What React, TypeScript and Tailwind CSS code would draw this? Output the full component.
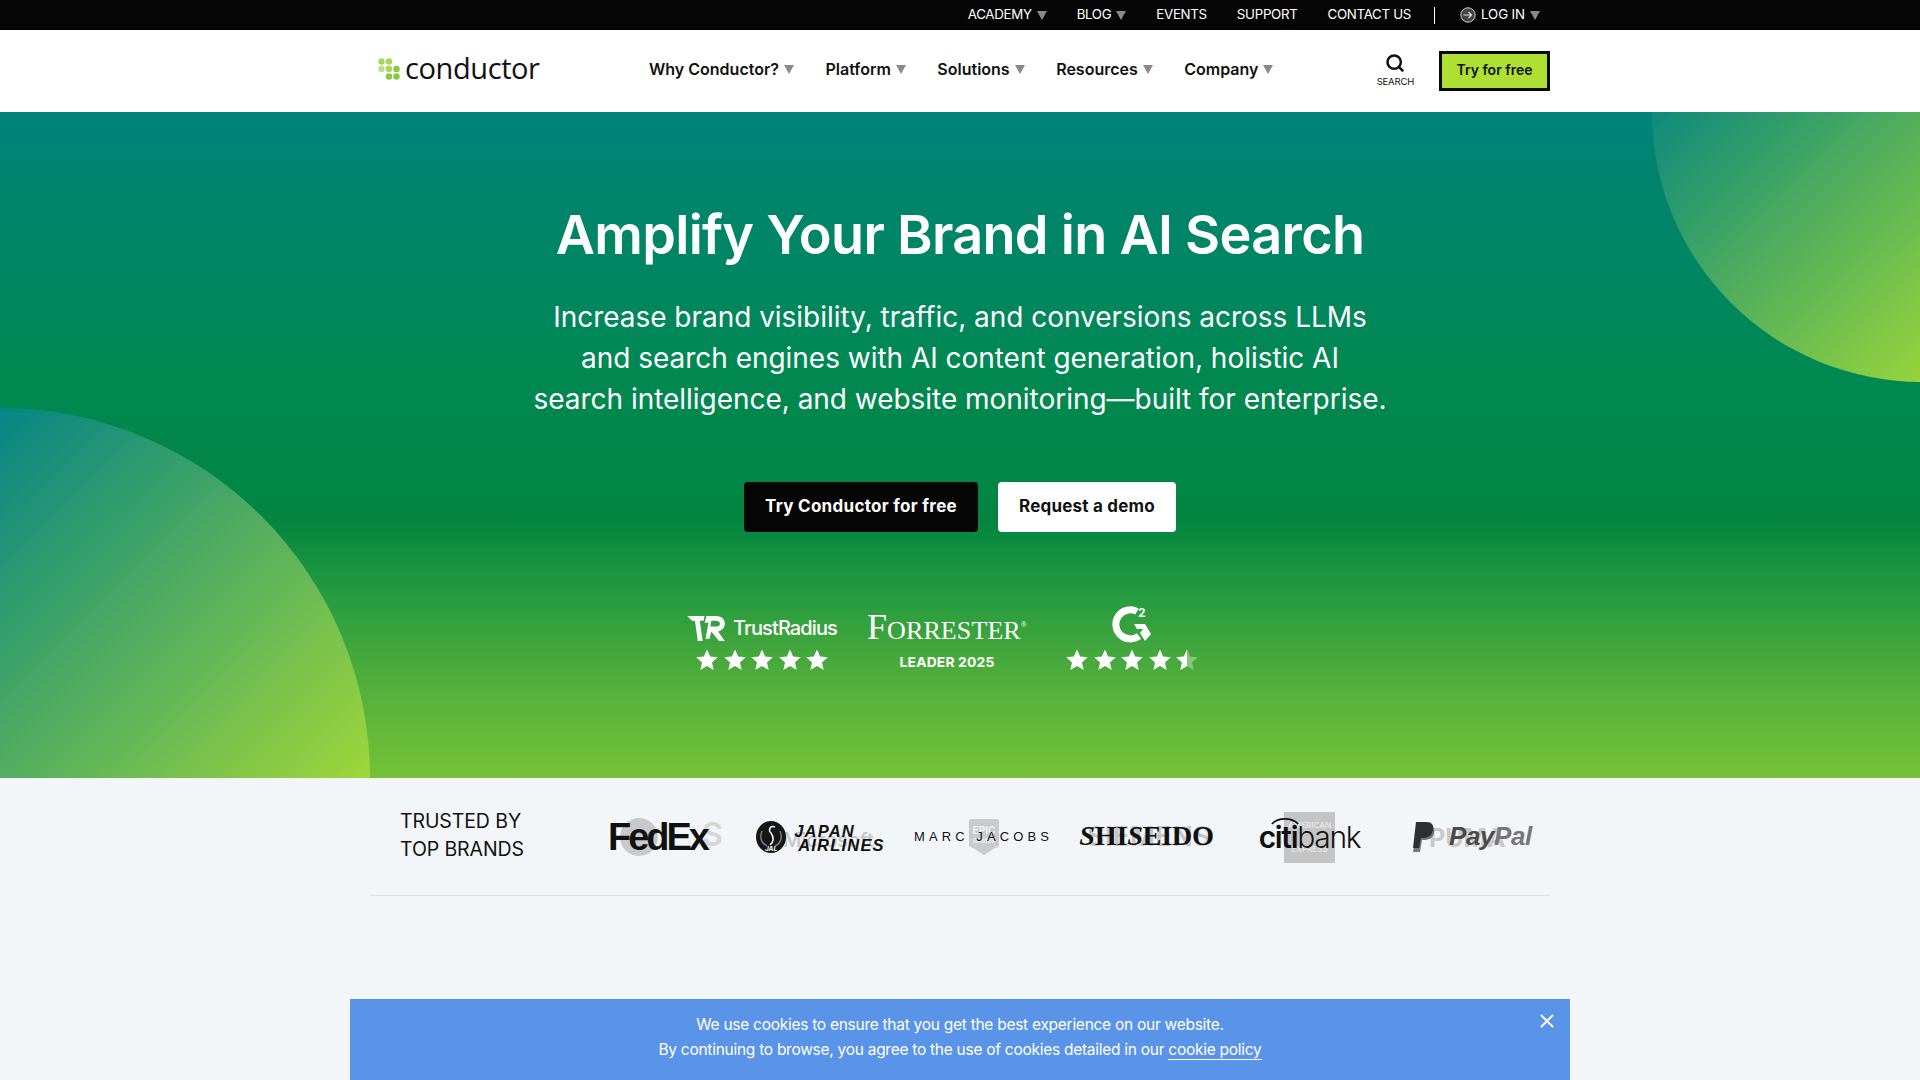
import React from 'react';
import { Search, X } from 'lucide-react';

const font = "font-['Inter','Noto_Sans',sans-serif]";

const Caret = ({ className = '' }: { className?: string }) => (
  <svg viewBox="0 0 10 9" className={`w-[10px] h-[9px] fill-[#8a8a8a] ${className}`}>
    <path d="M0 0h10L5 9z" />
  </svg>
);

const Star = ({ half = false }: { half?: boolean }) => (
  <svg viewBox="0 0 24 24" className="w-[24px] h-[24px]">
    <path
      d="M12 1.500l3.100 7.100 7.700.7-5.800 5.100 1.700 7.600-6.700-4-6.700 4 1.700-7.600-5.800-5.100 7.700-.7z"
      fill={half ? 'rgba(255,255,255,0.35)' : '#fff'}
    />
    {half && <path d="M12 1.500v16.500l-6.700 4 1.700-7.600-5.800-5.100 7.700-.7z" fill="#fff" />}
  </svg>
);

const topLinks = [
  { label: 'ACADEMY', caret: true },
  { label: 'BLOG', caret: true },
  { label: 'EVENTS', caret: false },
  { label: 'SUPPORT', caret: false },
  { label: 'CONTACT US', caret: false },
];

const navLinks = ['Why Conductor?', 'Platform', 'Solutions', 'Resources', 'Company'];

const TopBar = () => (
  <div className="h-[30px] bg-[#050505] flex justify-end items-center pr-[380px] text-white text-[13.3px] tracking-[-0.3px]">
    <div className="flex items-center gap-[30px]">
      {topLinks.map((l) => (
        <span key={l.label} className="flex items-center gap-[5px]">
          {l.label}
          {l.caret && <Caret />}
        </span>
      ))}
    </div>
    <div className="w-px h-[17px] bg-white ml-[23px] mr-[25px]" />
    <span className="flex items-center gap-[5px]">
      <svg viewBox="0 0 16 16" className="w-[16px] h-[16px]">
        <circle cx="8" cy="8" r="7.200" fill="#444" stroke="#ccc" strokeWidth="1" />
        <path d="M3.500 8h8M8.500 5l3 3-3 3" stroke="#ddd" strokeWidth="1.200" fill="none" />
      </svg>
      <span className="tracking-[-0.1px]">LOG IN</span>
      <Caret />
    </span>
  </div>
);

const Logo = () => (
  <div className="flex items-center gap-[4px] pl-[8px] -mt-[4px]">
    <svg viewBox="0 0 23 22" className="w-[23px] h-[22px]">
      <circle cx="3.500" cy="3.500" r="3.200" fill="#a8d65a" />
      <circle cx="11" cy="3.500" r="3.200" fill="#a8d65a" />
      <circle cx="3.500" cy="11" r="3.200" fill="#bce07a" />
      <circle cx="11" cy="11" r="3.200" fill="#a8d65a" />
      <circle cx="18.500" cy="11" r="3.200" fill="#8cc63f" />
      <circle cx="11" cy="18.500" r="3.200" fill="#8cc63f" />
      <circle cx="18.500" cy="18.500" r="3.200" fill="#8cc63f" />
    </svg>
    <span className="font-['Open_Sans',sans-serif] font-medium text-[29px] leading-none text-[#111] tracking-[-0.4px] pb-[3px]">conductor</span>
  </div>
);

const NavBar = () => (
  <div className="h-[82px] bg-white flex justify-center">
    <div className="w-[1180px] flex items-center">
      <div className="w-[279px]">
        <Logo />
      </div>
      <div className="flex items-center gap-[31.5px] text-[16px] font-semibold text-[#111] pb-[5px]">
        {navLinks.map((n) => (
          <span key={n} className="flex items-center gap-[5px]">
            {n}
            <Caret className="mt-[2px]" />
          </span>
        ))}
      </div>
      <div className="ml-auto flex items-center gap-[25px]">
        <div className="flex flex-col items-center text-[#111]">
          <Search size={20} strokeWidth={3} />
          <span className="text-[9.5px] tracking-[-0.2px] mt-[2px]">SEARCH</span>
        </div>
        <button className="w-[111px] h-[40px] bg-[#aee033] border-[3px] border-[#0a0a0a] text-[14px] font-semibold text-[#111] pb-[3px]">
          Try for free
        </button>
      </div>
    </div>
  </div>
);

const Ratings = () => (
  <div className="flex items-start justify-center text-white mt-[79px] pr-[26px]">
    <div className="flex flex-col items-center w-[185px]">
      <div className="flex items-center gap-[7px] h-[34px]">
        <svg viewBox="0 0 40 28" className="w-[39px] h-[27px] fill-white">
          <path d="M0 1h18l-1 5h-4l3 21h-5L8 6H5z" />
          <path
            fillRule="evenodd"
            d="M20 1h9c7 0 10 3.500 10 8 0 4-3 7-7 8l7 10h-6l-8-10-2 8h-4l3-17h-4zm5 5l-1 6h5c3 0 5-1 5-3s-2-3-5-3z"
          />
        </svg>
        <span className="text-[20px] font-medium tracking-[-0.9px]">TrustRadius</span>
      </div>
      <div className="flex gap-[3.500px] mt-[3px]">
        {[0, 1, 2, 3, 4].map((i) => <Star key={i} />)}
      </div>
    </div>
    <div className="flex flex-col items-center w-[185px] -mt-[3px]">
      <span className="font-['Liberation_Serif',serif] text-[26px] h-[36px] leading-[34px] tracking-[0.1px] whitespace-nowrap">
        <span className="text-[36px]">F</span>ORRESTER<span className="text-[8px] align-[12px]">®</span>
      </span>
      <span className="text-[13.800px] font-bold mt-[8px] tracking-[0.2px]">LEADER 2025</span>
    </div>
    <div className="flex flex-col items-center w-[185px] -mt-[7px]">
      <svg viewBox="0 0 40 40" className="w-[40px] h-[40px]">
        <path d="M25 7.500A14.500 14.500 0 1 0 27 32" fill="none" stroke="#fff" strokeWidth="7" />
        <path d="M22 20h11l6 10-6 7-5-8 3-4h-6z" fill="#fff" />
        <text x="26" y="13" fontSize="12" fontWeight="700" fill="#fff">2</text>
      </svg>
      <div className="flex gap-[3.500px] mt-[4px]">
        {[0, 1, 2, 3].map((i) => <Star key={i} />)}
        <Star half />
      </div>
    </div>
  </div>
);

const Hero = () => (
  <section className="relative h-[666px] overflow-hidden bg-[linear-gradient(180deg,#00837a_0%,#008851_40%,#028540_61%,#249a40_72%,#56b03a_87%,#74c236_100%)] text-white text-center">
    {/* corner circles */}
    <div className="absolute left-[-370px] top-[296px] w-[740px] h-[740px] rounded-full bg-[linear-gradient(135deg,#058585_25%,#9fd63a_75%)]" />
    <div className="absolute left-[1652px] top-[-270px] w-[540px] h-[540px] rounded-full bg-[linear-gradient(135deg,#0e8a7c_25%,#97d43c_75%)]" />
    <div className="relative">
      <h1 className="pt-[91px] text-[54px] leading-[64px] font-semibold tracking-[-0.7px]">Amplify Your Brand in AI Search</h1>
      <p className="mt-[30px] text-[28px] leading-[41px] tracking-[-0.03px]">
        Increase brand visibility, traffic, and conversions across LLMs
        <br />
        and search engines with AI content generation, holistic AI
        <br />
        search intelligence, and website monitoring—built for enterprise.
      </p>
      <div className="flex justify-center gap-[20px] mt-[62px]">
        <button className="w-[234px] h-[50px] rounded-[4px] bg-[#050505] text-[17px] font-bold text-white tracking-[0.3px]">Try Conductor for free</button>
        <button className="w-[178px] h-[50px] rounded-[4px] bg-white text-[17px] font-bold text-[#111] tracking-[0.2px]">Request a demo</button>
      </div>
      <Ratings />
    </div>
  </section>
);

// each cell: logo in the middle, faded next logo of the carousel over it
const Cell = ({ children }: { children: React.ReactNode }) => (
  <div className="relative h-[60px] flex items-center justify-center">{children}</div>
);

const Brands = () => (
  <section className="bg-[#f3f6f8] h-[302px] flex justify-center">
    <div className="w-[1180px] h-[118px] border-b border-[#dcdfe2] flex items-center pl-[30px]">
      <div className="w-[176px] shrink-0 text-[19.500px] leading-[28px] text-[#111] tracking-[-0.1px] pb-[4px]">
        TRUSTED BY
        <br />
        TOP BRANDS
      </div>
      <div className="w-[978px] shrink-0 grid grid-cols-6 text-[#111]">
        <Cell>
          <span className="absolute left-[44px] top-[11px] w-[38px] h-[38px] rounded-full bg-[#c8c9cb]" />
          <span className="absolute left-[126px] top-[11px] text-[32px] leading-[34px] font-semibold text-[#d4d6d8]">S</span>
          <span className="relative font-['Liberation_Sans',sans-serif] text-[38px] leading-none font-bold tracking-[-3px]">FedEx</span>
        </Cell>
        <Cell>
          <span className="absolute left-[44px] top-[21px] text-[20px] leading-[24px] font-medium text-[#c4c6c8] whitespace-nowrap">Microsoft</span>
          <span className="relative flex items-center gap-[8px]">
            <svg viewBox="0 0 30 32" className="w-[30px] h-[32px]">
              <ellipse cx="15" cy="16" rx="15" ry="16" fill="#161616" />
              <path d="M19 6c-5-2-7 3-4 6 3 4 3 9-1 12" stroke="#fff" strokeWidth="1.500" fill="none" />
              <path d="M6 10c-3 7 0 13 5 15M24 10c3 7 0 13-5 15" stroke="#777" strokeWidth="1.500" fill="none" />
              <text x="15" y="29.500" textAnchor="middle" fontSize="6.500" fontWeight="700" fontStyle="italic" fill="#fff">JAL</text>
            </svg>
            <span className="font-['Liberation_Sans',sans-serif] italic font-bold text-[16.500px] leading-[14px] text-left tracking-[1.2px] pt-[2px]">
              JAPAN
              <br />
              <span className="ml-[4px]">AIRLINES</span>
            </span>
          </span>
        </Cell>
        <Cell>
          <svg viewBox="0 0 30 36" className="absolute left-[67px] top-[12px] w-[30px] h-[36px]">
            <path d="M2 0h26a2 2 0 0 1 2 2v25l-4 2-11 7-11-7-4-2V2a2 2 0 0 1 2-2z" fill="#c8cacc" />
            <text x="15" y="15" textAnchor="middle" fontSize="10" fontWeight="700" fill="#f1f3f5">EPIC</text>
            <text x="15" y="24" textAnchor="middle" fontSize="6" fontWeight="700" fill="#f1f3f5">GAMES</text>
          </svg>
          <span className="relative font-['Liberation_Sans',sans-serif] text-[13px] tracking-[4.100px] whitespace-nowrap">MARC JACOBS</span>
        </Cell>
        <Cell>
          <span className="absolute left-[22px] top-[15px] text-[27px] leading-[30px] font-semibold text-[#c4c6c8] whitespace-nowrap tracking-[0.5px]">SIEMENS</span>
          <span className="relative font-['Liberation_Serif',serif] font-bold text-[28.300px] tracking-[-0.3px] whitespace-nowrap">
            <i>S</i>HI<i>S</i>EIDO
          </span>
        </Cell>
        <Cell>
          <span className="absolute left-[56px] top-[5px] w-[51px] h-[51px] bg-[#c4c4c4] flex flex-col items-center justify-center text-[8px] leading-[10px] font-semibold text-[#e6e6e6]">
            <span>AMERICAN</span>
            <span className="mt-[14px]">EXPRESS</span>
          </span>
          <span className="relative text-[30px] leading-none tracking-[-1.300px]">
            <svg viewBox="0 0 30 8" className="absolute left-[12px] top-[-5px] w-[28px] h-[8px]">
              <path d="M1 7C8 0 22 0 29 7" fill="none" stroke="#111" strokeWidth="2" />
            </svg>
            <b className="font-semibold">citi</b>
            <span className="font-light">bank</span>
          </span>
        </Cell>
        <Cell>
          <span className="absolute left-[38px] top-[17px] text-[25px] leading-[28px] font-bold text-[#c8cacc] whitespace-nowrap">PUMA</span>
          <span className="relative flex items-center gap-[14px] text-[#4a4a4a]">
            <svg viewBox="0 0 22 30" className="w-[22px] h-[30px]">
              <path d="M5 3h10c6 0 7 4 6 8-1 5-5 7-10 7H9l-2 12H0z" fill="#777" />
              <path d="M3 0h10c6 0 8 3 7 8-1 6-5 8-10 8H8l-2 10H0z" fill="#2f2f2f" />
            </svg>
            <span className="font-['Liberation_Sans',sans-serif] italic font-bold text-[26px] tracking-[-0.4px]">
              Pay<span className="text-[#777]">Pal</span>
            </span>
          </span>
        </Cell>
      </div>
    </div>
  </section>
);

const CookieBanner = () => (
  <div className="fixed bottom-0 left-[350px] w-[1220px] h-[81px] bg-[#5a94e8] text-white text-[15.500px] leading-[25px] text-center pt-[13px] tracking-[-0.27px]">
    <p>We use cookies to ensure that you get the best experience on our website.</p>
    <p>
      By continuing to browse, you agree to the use of cookies detailed in our{' '}
      <span className="border-b border-white">cookie policy</span>
    </p>
    <X size={22} strokeWidth={2} className="absolute right-[12px] top-[11px]" />
  </div>
);

export default function App() {
  return (
    <div className={`${font} h-[1080px] overflow-hidden`}>
      <TopBar />
      <NavBar />
      <Hero />
      <Brands />
      <CookieBanner />
    </div>
  );
}
